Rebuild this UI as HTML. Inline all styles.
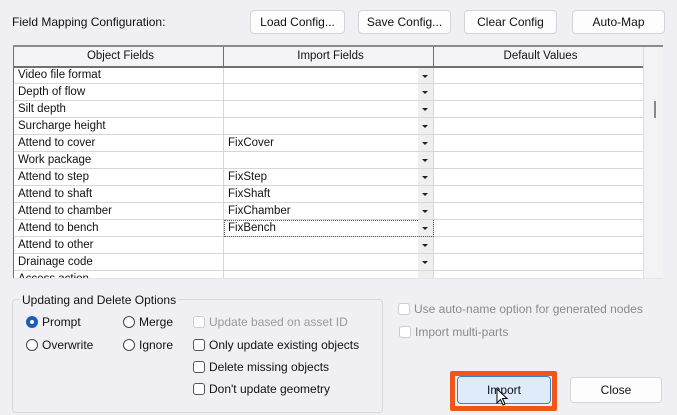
<!DOCTYPE html>
<html><head><meta charset="utf-8"><style>
*{box-sizing:border-box;margin:0;padding:0}
body{width:677px;height:415px;background:#f0eff3;font-family:"Liberation Sans",sans-serif;font-size:11.5px;color:#111;position:relative;overflow:hidden}
.a{position:absolute}
.btn{position:absolute;background:#fdfdfd;border:1px solid #d4d3d8;border-radius:4px;text-align:center;font-size:12px;line-height:22px}
table{border-collapse:collapse;table-layout:fixed}
td,th{height:17px;border:1px solid #d6d6d6;padding:0 0 0 4px;white-space:nowrap;overflow:hidden;font-weight:normal;text-align:left;line-height:15px;vertical-align:middle}
th{background:#f4f4f6;text-align:center;height:20px;border:1px solid #707070;border-bottom:2px solid #707070}
td.i{position:relative}
td.i::after{content:"";position:absolute;right:0;top:0;width:15px;height:16px;background:#efefef}
td.i::before{content:"";position:absolute;right:5px;top:7px;border-left:3px solid transparent;border-right:3px solid transparent;border-top:3px solid #222;z-index:1}
.rad{position:absolute;width:12px;height:12px;border:1px solid #444;border-radius:50%;background:#fff}
.chk{position:absolute;width:12px;height:12px;border:1px solid #555;border-radius:3px;background:#fff}
.lbl{position:absolute;font-size:12px;line-height:14px}
</style></head><body>
<div class="lbl" style="left:12px;top:15px">Field Mapping Configuration:</div>
<div class="btn" style="left:250px;top:10px;width:95px;height:24px">Load Config...</div>
<div class="btn" style="left:358px;top:10px;width:93px;height:24px">Save Config...</div>
<div class="btn" style="left:464px;top:10px;width:93px;height:24px">Clear Config</div>
<div class="btn" style="left:572px;top:10px;width:93px;height:24px">Auto-Map</div>

<div class="a" style="left:13px;top:45px;width:650px;height:233px;background:#fff;border-top:2px solid #8a8a8a;overflow:hidden">
<table style="width:630px;position:absolute;left:0;top:-1px">
<colgroup><col style="width:210px"><col style="width:210px"><col style="width:210px"></colgroup>
<tr><th>Object Fields</th><th>Import Fields</th><th>Default Values</th></tr>
<tr><td>Video file format</td><td class="i"></td><td></td></tr>
<tr><td>Depth of flow</td><td class="i"></td><td></td></tr>
<tr><td>Silt depth</td><td class="i"></td><td></td></tr>
<tr><td>Surcharge height</td><td class="i"></td><td></td></tr>
<tr><td>Attend to cover</td><td class="i">FixCover</td><td></td></tr>
<tr><td>Work package</td><td class="i"></td><td></td></tr>
<tr><td>Attend to step</td><td class="i">FixStep</td><td></td></tr>
<tr><td>Attend to shaft</td><td class="i">FixShaft</td><td></td></tr>
<tr><td>Attend to chamber</td><td class="i">FixChamber</td><td></td></tr>
<tr><td>Attend to bench</td><td class="i" style="outline:1px dotted #555;outline-offset:-1px">FixBench</td><td></td></tr>
<tr><td>Attend to other</td><td class="i"></td><td></td></tr>
<tr><td>Drainage code</td><td class="i"></td><td></td></tr>
<tr><td>Access action</td><td class="i"></td><td></td></tr>
</table>
<div class="a" style="left:0;top:0;width:1px;height:233px;background:#707070"></div>
<div class="a" style="left:630px;top:0;width:20px;height:233px;background:#f3f2f5;border-left:1px solid #ddd"></div>
<div class="a" style="left:641px;top:54px;width:2px;height:17px;background:#888"></div>
</div>
<div class="a" style="left:13px;top:278px;width:650px;height:1px;background:#e4e4e4"></div>

<div class="a" style="left:12px;top:299px;width:371px;height:114px;border:1px solid #d8d8dc;border-radius:4px"></div>
<div class="lbl" style="left:20px;top:293px;background:#f0eff3;padding:0 2px">Updating and Delete Options</div>
<div class="rad" style="left:26px;top:316px;border:4px solid #1a5fb4"></div><div class="lbl" style="left:42px;top:315px">Prompt</div>
<div class="rad" style="left:26px;top:339px"></div><div class="lbl" style="left:42px;top:338px">Overwrite</div>
<div class="rad" style="left:123px;top:316px"></div><div class="lbl" style="left:139px;top:315px">Merge</div>
<div class="rad" style="left:123px;top:339px"></div><div class="lbl" style="left:139px;top:338px">Ignore</div>
<div class="chk" style="left:193px;top:316px;border-color:#ccc"></div><div class="lbl" style="left:209px;top:315px;color:#9a9a9a">Update based on asset ID</div>
<div class="chk" style="left:193px;top:339px"></div><div class="lbl" style="left:209px;top:338px">Only update existing objects</div>
<div class="chk" style="left:193px;top:361px"></div><div class="lbl" style="left:209px;top:360px">Delete missing objects</div>
<div class="chk" style="left:193px;top:383px"></div><div class="lbl" style="left:209px;top:382px">Don't update geometry</div>

<div class="chk" style="left:398px;top:303px;border-color:#ccc"></div><div class="lbl" style="left:414px;top:302px;color:#8a8a8a">Use auto-name option for generated nodes</div>
<div class="chk" style="left:399px;top:326px;border-color:#ccc"></div><div class="lbl" style="left:415px;top:325px;color:#8a8a8a">Import multi-parts</div>

<div class="a" style="left:450px;top:371px;width:107px;height:40px;border:5px solid #f0561a;border-radius:2px;background:#f0eff3"></div>
<div class="btn" style="left:457px;top:376px;width:94px;height:28px;background:#dfeafa;border-color:#3b7fc9;line-height:26px">Import</div>
<svg class="a" style="left:496px;top:388px" width="14" height="20" viewBox="0 0 14 20"><path d="M1 1 L1 15 L4.5 11.5 L7 17 L9 16 L6.5 10.5 L11 10.5 Z" fill="#fff" stroke="#000" stroke-width="1"/></svg>
<div class="btn" style="left:570px;top:377px;width:92px;height:26px;line-height:24px">Close</div>
</body></html>
